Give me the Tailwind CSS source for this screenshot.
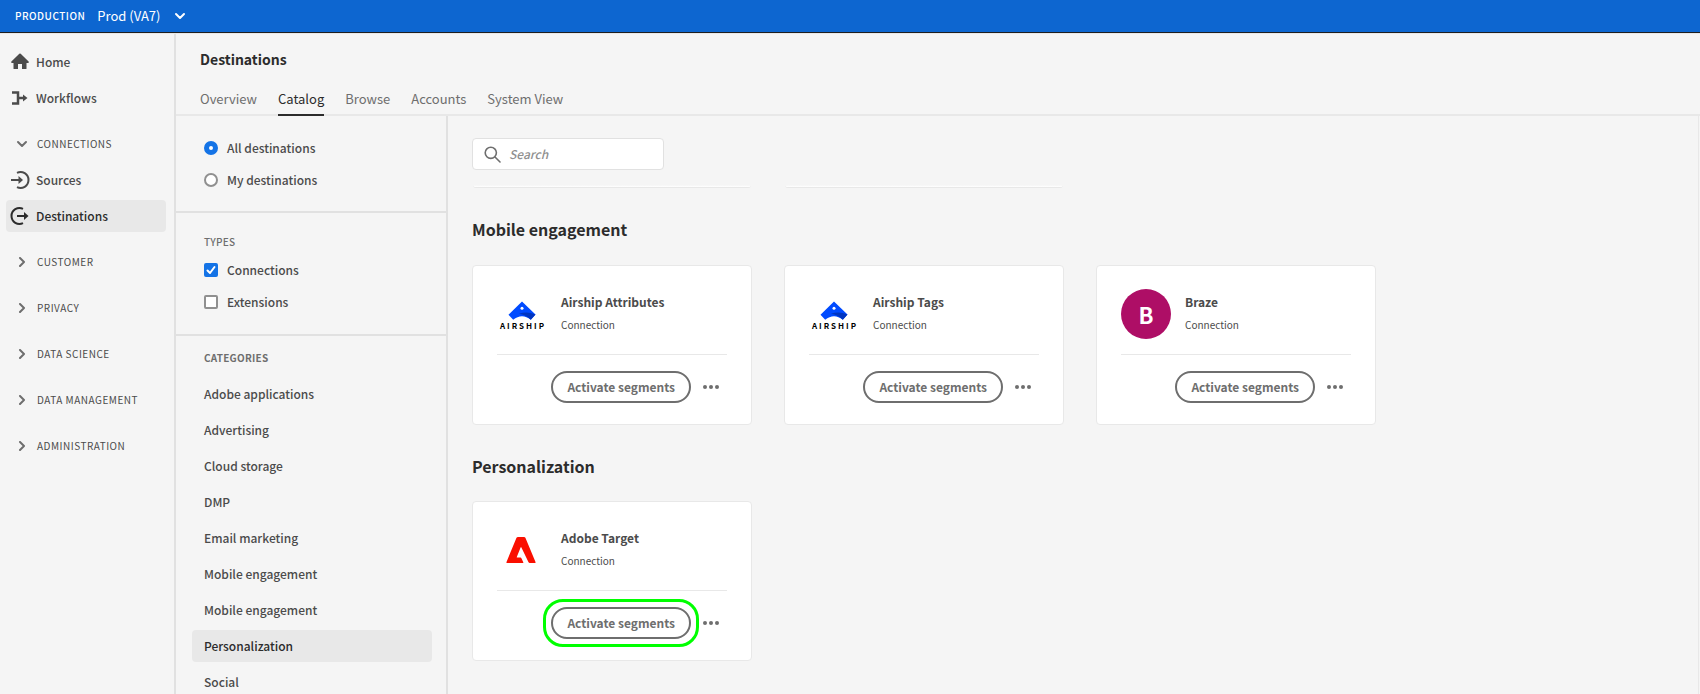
<!DOCTYPE html>
<html lang="en">
<head>
<meta charset="utf-8">
<meta name="viewport" content="width=device-width, initial-scale=1">
<title>Destinations catalog</title>
<script src="https://cdn.jsdelivr.net/npm/@tailwindcss/browser@4"></script>
</head>
<body class="flex h-screen flex-col overflow-hidden bg-[#f5f5f5] font-['Noto_Sans_CJK_SC','Noto_Sans',sans-serif] text-xs leading-5 text-[#4b4b4b]">

<svg class="hidden" aria-hidden="true">
  <symbol id="chevron" viewBox="0 0 10 10"><path d="M3 1l4 4-4 4" fill="none" stroke="currentColor" stroke-width="2" stroke-linecap="round" stroke-linejoin="round"/></symbol>
  <symbol id="chevron-down" viewBox="0 0 12 10"><path d="M2 3l4 4 4-4" fill="none" stroke="currentColor" stroke-width="2" stroke-linecap="round" stroke-linejoin="round"/></symbol>
  <symbol id="airship" viewBox="0 0 28 20">
    <path d="M14 .5L27.500 13.500 22.800 18.800C20 16.500 17 15.200 14 15.200S8 16.500 5.200 18.800L.5 13.800z" fill="#004bff"/>
    <path d="M11 12.800C16 10.800 22 11 27.500 13.500L22.800 18.800C19.500 15.800 15.500 13.300 11 12.800z" fill="#0035c0"/>
    <circle cx="14" cy="7.200" r="1.500" fill="#fff"/>
  </symbol>
  <symbol id="more" viewBox="0 0 16 4"><circle cx="2" cy="2" r="2"/><circle cx="8" cy="2" r="2"/><circle cx="14" cy="2" r="2"/></symbol>
</svg>

<header class="flex h-[33px] shrink-0 items-center border-b border-[#1e1e1e] bg-[#0d66d0] pl-[15px] text-white">
  <span class="text-[10px] font-medium leading-5 tracking-wider">PRODUCTION</span>
  <button class="ml-3 flex items-center gap-3.5 text-[13px]">Prod (VA7) <svg class="h-[10px] w-3"><use href="#chevron-down"/></svg></button>
</header>

<div class="flex min-h-0 flex-1 border-t border-[#e8e8e8]">
  <nav class="w-44 shrink-0 border-r-2 border-[#e1e1e1] pl-1.5 pr-2 pt-3 font-medium">
    <a href="#" class="flex h-8 items-center gap-1.5 pl-1">
      <svg class="size-5" viewBox="0 0 20 20" fill="#4b4b4b"><path d="M10 1.500a1 1 0 0 1 .7.300L18.600 9.600c.5.500.2 1.400-.5 1.400H16.500v5.500a.5.500 0 0 1-.5.500h-4v-5H8v5H4a.5.500 0 0 1-.5-.5V11H1.900c-.7 0-1-.9-.5-1.400L9.300 1.800a1 1 0 0 1 .7-.3z"/></svg>Home</a>
    <a href="#" class="mt-1 flex h-8 items-center gap-1.5 pl-1">
      <svg class="size-5" viewBox="0 0 20 20"><path d="M2 4.500h6v11H2M8 10h6" fill="none" stroke="#4b4b4b" stroke-width="2.500"/><path d="M13 6.500l4.500 3.500L13 13.500z" fill="#4b4b4b"/></svg>Workflows</a>
    <button class="mt-3.5 flex h-8 items-center gap-[9px] pl-[10px] text-[10px] font-normal leading-5 tracking-wider"><svg class="h-[10px] w-3 text-[#6e6e6e]"><use href="#chevron-down"/></svg>CONNECTIONS</button>
    <a href="#" class="mt-1 flex h-8 items-center gap-1.5 pl-1">
      <svg class="size-5" viewBox="0 0 20 20"><path d="M7 2.800A8 8 0 1 1 7 17.200" fill="none" stroke="#4b4b4b" stroke-width="2"/><path d="M1 10h8" stroke="#4b4b4b" stroke-width="2"/><path d="M8.500 6l4.500 4-4.500 4z" fill="#4b4b4b"/></svg>Sources</a>
    <a href="#" aria-current="page" class="mt-1 flex h-8 items-center gap-1.5 rounded bg-[#e8e8e8] pl-1 text-[#2c2c2c]">
      <svg class="size-5" viewBox="0 0 20 20"><path d="M13 2.800A8 8 0 1 0 13 17.200" fill="none" stroke="#2c2c2c" stroke-width="2"/><path d="M7 10h8" stroke="#2c2c2c" stroke-width="2"/><path d="M14 6l4.500 4-4.500 4z" fill="#2c2c2c"/></svg>Destinations</a>
    <button class="mt-3.5 flex h-8 items-center gap-[10px] pl-[11px] text-[10px] font-normal leading-5 tracking-wider"><svg class="size-[10px] text-[#6e6e6e]"><use href="#chevron"/></svg>CUSTOMER</button>
    <button class="mt-3.5 flex h-8 items-center gap-[10px] pl-[11px] text-[10px] font-normal leading-5 tracking-wider"><svg class="size-[10px] text-[#6e6e6e]"><use href="#chevron"/></svg>PRIVACY</button>
    <button class="mt-3.5 flex h-8 items-center gap-[10px] pl-[11px] text-[10px] font-normal leading-5 tracking-wider"><svg class="size-[10px] text-[#6e6e6e]"><use href="#chevron"/></svg>DATA SCIENCE</button>
    <button class="mt-3.5 flex h-8 items-center gap-[10px] pl-[11px] text-[10px] font-normal leading-5 tracking-wider"><svg class="size-[10px] text-[#6e6e6e]"><use href="#chevron"/></svg>DATA MANAGEMENT</button>
    <button class="mt-3.5 flex h-8 items-center gap-[10px] pl-[11px] text-[10px] font-normal leading-5 tracking-wider"><svg class="size-[10px] text-[#6e6e6e]"><use href="#chevron"/></svg>ADMINISTRATION</button>
  </nav>

  <div class="flex min-w-0 flex-1 flex-col">
    <div class="shrink-0 border-b-2 border-[#e8e8e8] pl-6 pt-[13px]">
      <h1 class="text-sm font-bold leading-6 text-[#2c2c2c]">Destinations</h1>
      <div class="-mb-0.5 mt-[13px] flex gap-[21px] text-[13px] text-[#6e6e6e]">
        <a href="#" class="flex h-8 items-center border-b-2 border-transparent">Overview</a>
        <a href="#" aria-current="page" class="flex h-8 items-center border-b-2 border-[#2c2c2c] text-[#2c2c2c]">Catalog</a>
        <a href="#" class="flex h-8 items-center border-b-2 border-transparent">Browse</a>
        <a href="#" class="flex h-8 items-center border-b-2 border-transparent">Accounts</a>
        <a href="#" class="flex h-8 items-center border-b-2 border-transparent">System View</a>
      </div>
    </div>

    <div class="flex min-h-0 flex-1">
      <aside class="w-[272px] shrink-0 overflow-hidden border-r-2 border-[#e1e1e1] font-medium">
        <div class="flex flex-col border-b-2 border-[#e1e1e1] px-7 pb-[15px] pt-4">
          <label class="flex h-8 items-center gap-[9px]"><input type="radio" name="scope" checked class="size-3.5 appearance-none rounded-full border-2 border-[#909090] bg-white checked:border-5 checked:border-[#1473e6]">All destinations</label>
          <label class="flex h-8 items-center gap-[9px]"><input type="radio" name="scope" class="size-3.5 appearance-none rounded-full border-2 border-[#909090] bg-white checked:border-5 checked:border-[#1473e6]">My destinations</label>
        </div>
        <fieldset class="flex flex-col border-b-2 border-[#e1e1e1] px-7 pb-4 pt-[19px]">
          <legend class="contents"><span class="text-[10px] leading-5 tracking-wide text-[#6e6e6e]">TYPES</span></legend>
          <label class="mt-0.5 flex h-8 items-center gap-[9px]"><span class="grid size-3.5"><input type="checkbox" checked class="peer col-start-1 row-start-1 size-3.5 appearance-none rounded-xs border-2 border-[#909090] bg-white checked:border-[#1473e6] checked:bg-[#1473e6]"><svg class="pointer-events-none invisible col-start-1 row-start-1 size-3.5 peer-checked:visible" viewBox="0 0 14 14"><path d="M3.500 7.500l2.500 2.500 4.500-6" fill="none" stroke="#fff" stroke-width="2" stroke-linecap="round" stroke-linejoin="round"/></svg></span>Connections</label>
          <label class="flex h-8 items-center gap-[9px]"><input type="checkbox" class="size-3.5 appearance-none rounded-xs border-2 border-[#909090] bg-white">Extensions</label>
        </fieldset>
        <div class="pl-4 pr-3.5 pt-3">
          <h2 class="px-3 text-[10px] font-bold leading-5 tracking-wide text-[#6e6e6e]">CATEGORIES</h2>
          <ul class="mt-[10px] flex flex-col gap-1">
            <li><a href="#" class="flex h-8 items-center rounded px-3">Adobe applications</a></li>
            <li><a href="#" class="flex h-8 items-center rounded px-3">Advertising</a></li>
            <li><a href="#" class="flex h-8 items-center rounded px-3">Cloud storage</a></li>
            <li><a href="#" class="flex h-8 items-center rounded px-3">DMP</a></li>
            <li><a href="#" class="flex h-8 items-center rounded px-3">Email marketing</a></li>
            <li><a href="#" class="flex h-8 items-center rounded px-3">Mobile engagement</a></li>
            <li><a href="#" class="flex h-8 items-center rounded px-3">Mobile engagement</a></li>
            <li><a href="#" aria-current="true" class="flex h-8 items-center rounded bg-[#e8e8e8] px-3 text-[#2c2c2c]">Personalization</a></li>
            <li><a href="#" class="flex h-8 items-center rounded px-3">Social</a></li>
          </ul>
        </div>
      </aside>

      <main class="mr-px min-w-0 flex-1 border-r border-[#e8e8e8] px-6 pt-[22px]">
        <label class="flex h-8 w-48 items-center gap-2 rounded border border-[#e1e1e1] bg-white pl-[11px]">
          <svg class="size-[17px] shrink-0" viewBox="0 0 17 17" fill="none" stroke="#6e6e6e" stroke-width="1.600" stroke-linecap="round"><circle cx="6.800" cy="6.800" r="5.600"/><path d="M11 11l5 5"/></svg>
          <input type="search" placeholder="Search" aria-label="Search" class="w-full bg-transparent font-medium italic outline-none placeholder:text-[#909090]">
        </label>

        <div class="flex flex-wrap gap-8 pt-[15px]">
          <div class="w-[280px] px-px"><div class="h-[3px] rounded-b border-b border-[#e8e8e8] bg-linear-to-b from-[#f5f5f5] to-white"></div></div>
          <div class="w-[280px] px-px"><div class="h-[3px] rounded-b border-b border-[#e8e8e8] bg-linear-to-b from-[#f5f5f5] to-white"></div></div>
        </div>

        <h2 class="mt-[29px] text-base font-bold leading-6 text-[#2c2c2c]">Mobile engagement</h2>
        <div class="mt-6 flex flex-wrap gap-8">
          <article class="h-40 w-[280px] rounded border border-[#e8e8e8] bg-white px-6 pt-[23px]">
            <div class="flex h-[66px] gap-[14px] border-b border-[#e8e8e8]">
              <div class="flex h-[50px] w-[50px] flex-col items-center justify-end pb-2">
                <svg class="h-5 w-7"><use href="#airship"/></svg>
                <span class="pl-0.5 text-[8px] font-bold leading-[10px] tracking-[2px] text-black">AIRSHIP</span>
              </div>
              <div class="pt-[3px]"><h3 class="font-bold">Airship Attributes</h3><p class="mt-[3px] text-[10px] leading-5">Connection</p></div>
            </div>
            <div class="mt-4 flex items-center justify-end gap-3 pr-2">
              <button class="h-8 rounded-full border-2 border-[#6e6e6e] px-3.5 font-bold text-[#6e6e6e]">Activate segments</button>
              <button aria-label="More actions"><svg class="h-1 w-4" fill="#6e6e6e"><use href="#more"/></svg></button>
            </div>
          </article>
          <article class="h-40 w-[280px] rounded border border-[#e8e8e8] bg-white px-6 pt-[23px]">
            <div class="flex h-[66px] gap-[14px] border-b border-[#e8e8e8]">
              <div class="flex h-[50px] w-[50px] flex-col items-center justify-end pb-2">
                <svg class="h-5 w-7"><use href="#airship"/></svg>
                <span class="pl-0.5 text-[8px] font-bold leading-[10px] tracking-[2px] text-black">AIRSHIP</span>
              </div>
              <div class="pt-[3px]"><h3 class="font-bold">Airship Tags</h3><p class="mt-[3px] text-[10px] leading-5">Connection</p></div>
            </div>
            <div class="mt-4 flex items-center justify-end gap-3 pr-2">
              <button class="h-8 rounded-full border-2 border-[#6e6e6e] px-3.5 font-bold text-[#6e6e6e]">Activate segments</button>
              <button aria-label="More actions"><svg class="h-1 w-4" fill="#6e6e6e"><use href="#more"/></svg></button>
            </div>
          </article>
          <article class="h-40 w-[280px] rounded border border-[#e8e8e8] bg-white px-6 pt-[23px]">
            <div class="flex h-[66px] gap-[14px] border-b border-[#e8e8e8]">
              <div class="flex h-[50px] w-[50px] items-center justify-center rounded-full bg-[#ae0e66] text-[22px] font-bold text-white">B</div>
              <div class="pt-[3px]"><h3 class="font-bold">Braze</h3><p class="mt-[3px] text-[10px] leading-5">Connection</p></div>
            </div>
            <div class="mt-4 flex items-center justify-end gap-3 pr-2">
              <button class="h-8 rounded-full border-2 border-[#6e6e6e] px-3.5 font-bold text-[#6e6e6e]">Activate segments</button>
              <button aria-label="More actions"><svg class="h-1 w-4" fill="#6e6e6e"><use href="#more"/></svg></button>
            </div>
          </article>
        </div>

        <h2 class="mt-[29px] text-base font-bold leading-6 text-[#2c2c2c]">Personalization</h2>
        <div class="mt-[23px] flex flex-wrap gap-8">
          <article class="h-40 w-[280px] rounded border border-[#e8e8e8] bg-white px-6 pt-[23px]">
            <div class="flex h-[66px] gap-[14px] border-b border-[#e8e8e8]">
              <div class="flex h-[50px] w-12 items-center justify-center">
                <svg class="h-[26px] w-[30px]" viewBox="0 0 30 26"><path d="M10.500.8Q11 0 12 0h6q1 0 1.400.8L29.500 25q.3 1-.7 1h-5q-1 0-1.400-1L15.400 10.500q-.4-.8-.8 0L10.800 20q-.2.600.4.600h3.300q.6 0 .9.600l1.900 4q.2.800-.6.800H1.200q-1 0-.7-1z" fill="#fa0f00"/></svg>
              </div>
              <div class="pl-0.5 pt-[3px]"><h3 class="font-bold">Adobe Target</h3><p class="mt-[3px] text-[10px] leading-5">Connection</p></div>
            </div>
            <div class="mt-4 flex items-center justify-end gap-3 pr-2">
              <div class="relative flex">
                <button class="h-8 rounded-full border-2 border-[#6e6e6e] px-3.5 font-bold text-[#6e6e6e]">Activate segments</button>
                <span class="pointer-events-none absolute -inset-2 rounded-[20px] border-3 border-[#00ff00]"></span>
              </div>
              <button aria-label="More actions"><svg class="h-1 w-4" fill="#6e6e6e"><use href="#more"/></svg></button>
            </div>
          </article>
        </div>
      </main>
    </div>
  </div>
</div>
</body>
</html>
